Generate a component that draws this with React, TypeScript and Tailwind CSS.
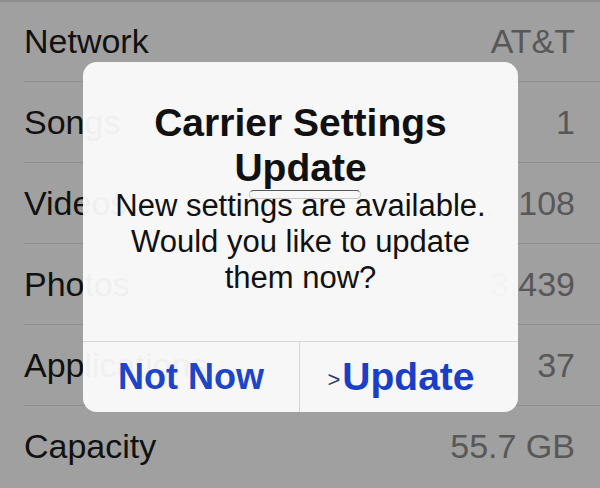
const rows = [
    {label: 'Network', value: 'AT&T'},
    {label: 'Songs', value: '1'},
    {label: 'Videos', value: '108'},
    {label: 'Photos', value: '3,439'},
    {label: 'Applications', value: '37'},
    {label: 'Capacity', value: '55.7 GB'},
]

function App() {
    return (
        <div className="relative w-[600px] h-[488px] overflow-hidden bg-[#a0a0a0] font-['Liberation_Sans',Arial,sans-serif]">
            <div className="h-[2px] bg-[#8e8e8e]"></div>
            <div className="flex flex-col pl-[24px]">
                {rows.map((r, i) => (
                    <div key={r.label} className={`flex items-center justify-between pr-[25px] border-b border-[#8f8f8f] ${i === 0 ? 'h-[80px]' : 'h-[81px]'} ${i === rows.length - 1 ? 'border-b-0' : ''}`}>
                        <span className="text-[34px] text-[#111]">{r.label}</span>
                        <span className="text-[34px] text-[#585858]">{r.value}</span>
                    </div>
                ))}
            </div>

            <div className="absolute left-[83px] top-[62px] w-[435px] h-[350px] rounded-[14px] bg-[rgba(252,252,252,0.95)] flex flex-col">
                <div className="flex-1 flex flex-col items-center pt-[38px] text-center">
                    <div className="text-[39px] leading-[45px] font-bold text-[#111]">
                        Carrier Settings<br/>Update
                    </div>
                    <div className="-mt-[2px] text-[31px] leading-[36px] text-[#111]">
                        New settings are available.<br/>Would you like to update<br/>them now?
                    </div>
                </div>
                <div className="absolute left-[166px] top-[128px] w-[112px] h-[9px] rounded-full border border-[#c8c8c8] border-t-[#5a5a5a]"></div>
                <div className="h-[71px] flex border-t border-[#d6d6d6]">
                    <div className="w-[217px] flex items-center justify-center border-r border-[#d6d6d6]">
                        <span className="text-[36px] font-bold text-[#1e44c8]">Not Now</span>
                    </div>
                    <div className="flex-1 flex items-center justify-center pr-[16px]">
                        <span className="text-[22px] text-[#2b3a6e] mt-[4px] mr-[2px]">&gt;</span>
                        <span className="text-[39px] font-bold text-[#1a3fc6]">Update</span>
                    </div>
                </div>
            </div>
        </div>
    );
}

export default App;
